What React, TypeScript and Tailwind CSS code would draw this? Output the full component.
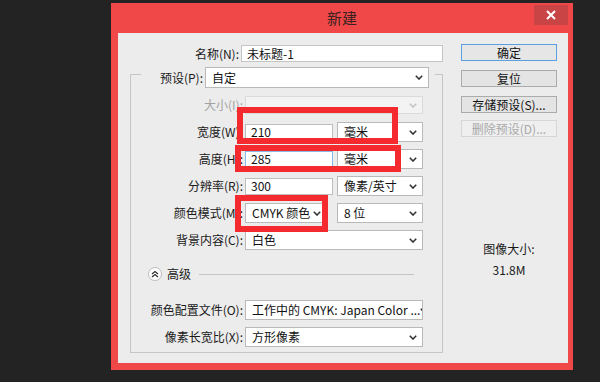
import type { ReactNode } from "react";

const font = {
  fontFamily: '"Noto Sans CJK SC", "Noto Sans", sans-serif',
};

function Chevron({ muted }: { muted?: boolean }) {
  return (
    <svg width="8" height="5" viewBox="0 0 8 5" className="shrink-0">
      <polyline
        points="0.8,0.8 4,4 7.2,0.8"
        fill="none"
        stroke={muted ? "#c4c4c4" : "#333"}
        strokeWidth="1.6"
      />
    </svg>
  );
}

function Select({
  value,
  w,
  h = 20,
  disabled,
}: {
  value?: string;
  w: number;
  h?: number;
  disabled?: boolean;
}) {
  return (
    <div
      className={
        "flex items-center justify-between pl-[6px] pr-[5px] border whitespace-nowrap overflow-hidden " +
        (disabled ? "bg-[#f3f3f3] border-[#dadada]" : "bg-white border-[#b9b9b9]")
      }
      style={{ width: w, height: h }}
    >
      <span className="text-[#111]">{value}</span>
      <Chevron muted={disabled} />
    </div>
  );
}

function Input({ value, focus }: { value: string; focus?: boolean }) {
  return (
    <div
      className={
        "w-[88px] h-[17px] bg-white border flex items-center pl-[5px] text-[#111] " +
        (focus ? "border-[#8ab8e6]" : "border-[#bdbdbd]")
      }
    >
      {value}
    </div>
  );
}

function Row({
  label,
  disabled,
  className = "mt-[7px]",
  children,
}: {
  label: string;
  disabled?: boolean;
  className?: string;
  children: ReactNode;
}) {
  return (
    <div className={"flex items-center h-[20px] " + className}>
      <div
        className={
          "w-[112px] text-right whitespace-nowrap " +
          (disabled ? "text-[#a3a3a3]" : "text-[#1a1a1a]")
        }
      >
        {label}
      </div>
      <div className="ml-[2px] flex items-center">{children}</div>
    </div>
  );
}

function Button({
  label,
  primary,
  disabled,
  className = "",
}: {
  label: string;
  primary?: boolean;
  disabled?: boolean;
  className?: string;
}) {
  return (
    <div
      className={
        "w-[96px] h-[17px] flex items-center justify-center border " +
        (primary
          ? "border-[#5b9fe0] bg-[#e6e6e6] text-[#111]"
          : disabled
            ? "border-[#d6d6d6] bg-[#efefef] text-[#a8a8a8]"
            : "border-[#ababab] bg-[#e4e4e4] text-[#111]") +
        " " +
        className
      }
    >
      {label}
    </div>
  );
}

export default function App() {
  return (
    <div
      className="relative w-[600px] h-[382px] overflow-hidden bg-[#232323] pl-[111px] pt-[3px] text-[12px] leading-[16px]"
      style={font}
    >
      <div className="w-[462px] h-[367px] bg-[#f04848] flex flex-col">
        {/* title bar */}
        <div className="h-[30px] grid grid-cols-[1fr_auto_1fr] items-start">
          <div />
          <div className="pt-[6px] text-[15px] leading-[18px] text-[#3a2222]">新建</div>
          <div className="justify-self-end mr-[5px] mt-[2px] w-[34px] h-[20px] bg-[#c94444] flex items-center justify-center">
            <svg width="10" height="10" viewBox="0 0 10 10">
              <path d="M1 1 L9 9 M9 1 L1 9" stroke="#fff" strokeWidth="2" />
            </svg>
          </div>
        </div>

        {/* client area */}
        <div className="ml-[7px] mr-[5px] h-[330px] bg-[#ececec] flex pl-[12px] pt-[11px]">
          <div className="w-[313px] shrink-0">
            <div className="flex items-center h-[17px] mt-[1px]">
              <div className="w-[113px] text-right text-[#1a1a1a] whitespace-nowrap">名称(N):</div>
              <div className="ml-[2px] w-[202px] h-[17px] shrink-0 bg-white border border-[#c4c4c4] flex items-center pl-[5px] text-[#111]">
                未标题-1
              </div>
            </div>

            <div className="mt-[12px] w-[313px] h-[279px] border border-[#c6c6c6] flex flex-col">
              <div className="-mt-[8px] ml-[10px] w-[294px] h-[21px] bg-[#ececec] flex items-center">
                <div className="w-[62px] text-right text-[#1a1a1a] whitespace-nowrap">预设(P):</div>
                <div className="ml-[2px]">
                  <Select value="自定" w={224} h={21} />
                </div>
              </div>

              <Row label="大小(I):" disabled>
                <Select w={178} h={18} disabled />
              </Row>
              <Row label="宽度(W):">
                <Input value="210" />
                <div className="ml-[4px]">
                  <Select value="毫米" w={86} />
                </div>
              </Row>
              <Row label="高度(H):">
                <Input value="285" focus />
                <div className="ml-[4px]">
                  <Select value="毫米" w={86} />
                </div>
              </Row>
              <Row label="分辨率(R):">
                <Input value="300" />
                <div className="ml-[4px]">
                  <Select value="像素/英寸" w={86} />
                </div>
              </Row>
              <Row label="颜色模式(M):">
                <Select value="CMYK 颜色" w={82} />
                <div className="ml-[10px]">
                  <Select value="8 位" w={86} />
                </div>
              </Row>
              <Row label="背景内容(C):">
                <Select value="白色" w={178} />
              </Row>

              <div className="mt-[14px] h-[20px] flex items-center pl-[17px]">
                <div className="w-[14px] h-[14px] rounded-full bg-white border border-[#bcbcbc] flex items-center justify-center">
                  <svg width="8" height="8" viewBox="0 0 8 8">
                    <polyline points="1,4 4,1.5 7,4" fill="none" stroke="#333" strokeWidth="1.3" />
                    <polyline points="1,7 4,4.5 7,7" fill="none" stroke="#333" strokeWidth="1.3" />
                  </svg>
                </div>
                <span className="ml-[5px] text-[#1a1a1a]">高级</span>
                <div className="ml-[8px] mr-[28px] flex-1 h-px bg-[#c4c4c4]" />
              </div>

              <Row label="颜色配置文件(O):" className="mt-[16px]">
                <Select value="工作中的 CMYK: Japan Color ..." w={178} />
              </Row>
              <Row label="像素长宽比(X):">
                <Select value="方形像素" w={178} />
              </Row>
            </div>
          </div>

          <div className="ml-[18px] w-[96px] shrink-0 flex flex-col">
            <Button label="确定" primary />
            <Button label="复位" className="mt-[9px]" />
            <Button label="存储预设(S)..." className="mt-[9px]" />
            <Button label="删除预设(D)..." disabled className="mt-[7px]" />
            <div className="mt-[104px] text-center text-[#1a1a1a]">图像大小:</div>
            <div className="mt-[5px] text-center text-[#1a1a1a]">31.8M</div>
          </div>
        </div>
      </div>

      {/* annotation boxes drawn over the dialog */}
      <div className="absolute left-[237px] top-[107px] w-[161px] h-[37px] border-[6px] border-[#f52a2f]" />
      <div className="absolute left-[235px] top-[145px] w-[166px] h-[27px] border-[6px] border-[#f52a2f]" />
      <div className="absolute left-[235px] top-[195px] w-[93px] h-[37px] border-[6px] border-[#f52a2f]" />
    </div>
  );
}
